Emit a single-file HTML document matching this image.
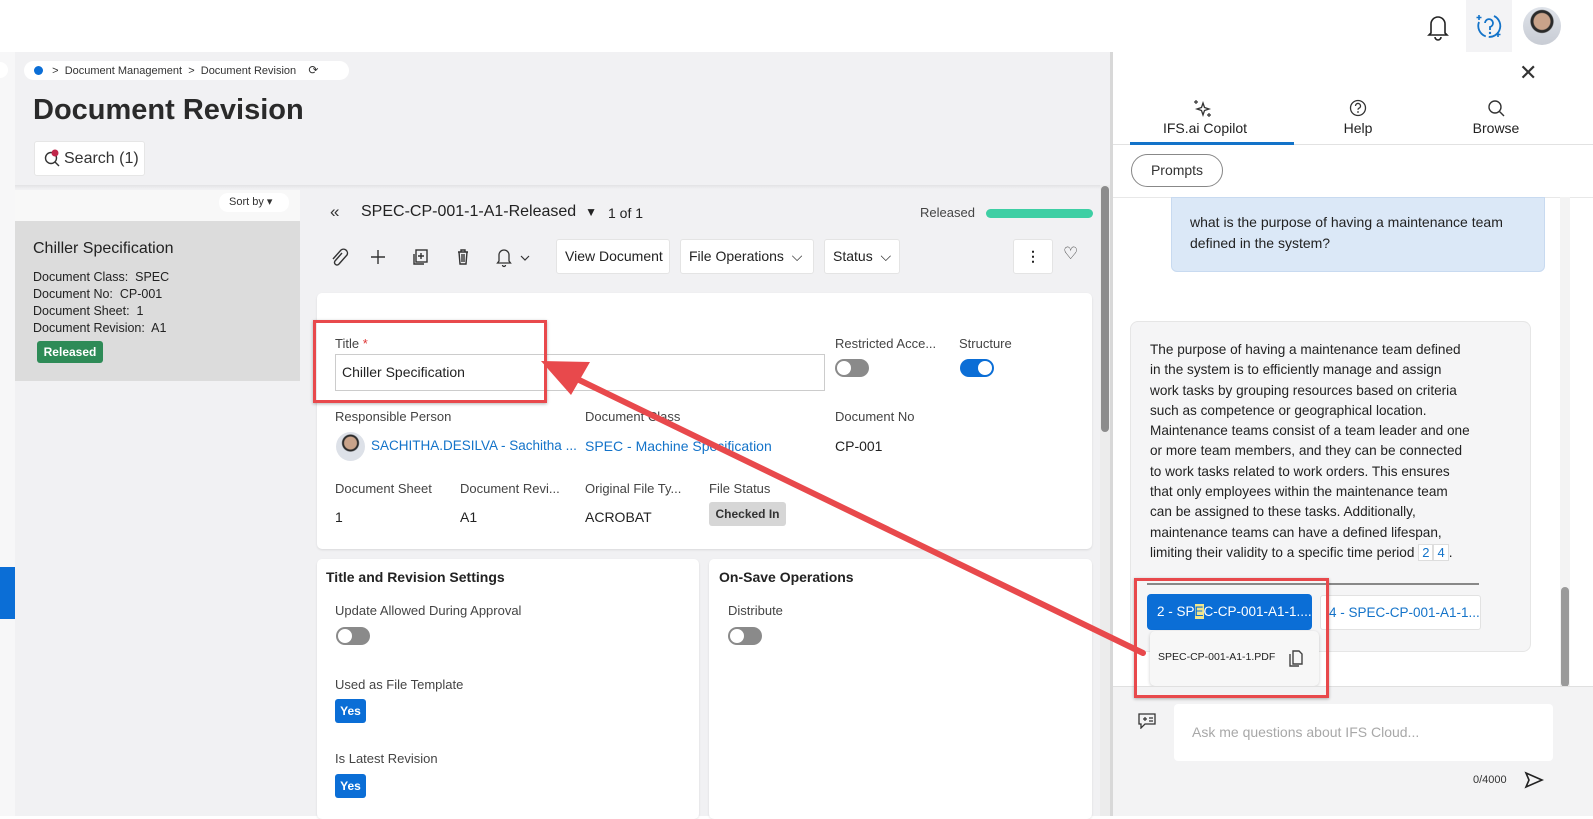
<!DOCTYPE html>
<html><head><meta charset="utf-8"><style>
*{box-sizing:border-box;margin:0;padding:0}
body{width:1593px;height:816px;overflow:hidden;font-family:"Liberation Sans",sans-serif;background:#fff;position:relative;color:#222}
.a{position:absolute;white-space:nowrap}
.lbl{font-size:13px;color:#444}
.val{font-size:14px;color:#222}
.link{font-size:14px;color:#1373c9}
.tog{width:34px;height:18px;border-radius:9px;background:#8a8a8a;position:absolute}
.tog::after{content:"";position:absolute;left:1px;top:1px;width:16px;height:16px;border-radius:50%;background:#fff;border:1px solid #8a8a8a;box-sizing:border-box}
.tog.on{background:#0b6ed6}.tog.on::after{left:17px;border-color:#0b6ed6}
.yes{background:#0b6ed6;color:#fff;font-weight:bold;font-size:12px;border-radius:3px;width:31px;height:24px;line-height:24px;text-align:center;position:absolute}
.btn{position:absolute;background:#fff;border:1px solid #e4e4e4;border-radius:3px;font-size:14px;height:35px;line-height:33px;padding:0 8px;color:#222;white-space:nowrap}
.card{position:absolute;background:#fff;border-radius:5px;box-shadow:0 1px 2px rgba(0,0,0,.1)}
</style></head><body>
<div class="a" style="left:0;top:0;width:1593px;height:51px;background:#fff"></div>
<svg class="a" style="left:1425px;top:13px" width="26" height="28" viewBox="0 0 26 28"><path d="M6 20V11a7 7 0 0 1 14 0v9l2 2H4z M10 24a3 3 0 0 0 6 0" fill="none" stroke="#222" stroke-width="1.6"/></svg>
<div class="a" style="left:1466px;top:0;width:46px;height:52px;background:#f3f3f5"></div>
<svg class="a" style="left:1475px;top:12px" width="28" height="28" viewBox="0 0 28 28"><path d="M19 4a11 11 0 1 1-15 6" fill="none" stroke="#1373c9" stroke-width="1.8" stroke-dasharray="30 3"/><path d="M10 11a4 4 0 1 1 5 4v3" fill="none" stroke="#1373c9" stroke-width="1.8"/><circle cx="15" cy="21" r="1.2" fill="#1373c9"/><path d="M4 3v5M1.5 5.5h5M23 20v5M20.5 22.5h5" stroke="#1373c9" stroke-width="1.6"/></svg>
<div class="a" style="left:1523px;top:7px;width:38px;height:38px;border-radius:50%;background:radial-gradient(circle at 50% 38%,#c9a38a 0 8px,#2a2a2a 9px 11px,transparent 12px),linear-gradient(#dfe3ea,#c8ccd4)"></div>
<div class="a" style="left:0;top:52px;width:1110px;height:764px;background:#f1f1f3"></div>
<div class="a" style="left:0;top:52px;width:15px;height:764px;background:#f7f7f8"></div>
<div class="a" style="left:0;top:62px;width:8px;height:16px;background:#fff;border-radius:0 8px 8px 0"></div>
<div class="a" style="left:0;top:567px;width:15px;height:52px;background:#0b6ed6"></div>
<div class="a" style="left:24px;top:61px;width:325px;height:19px;background:#fff;border-radius:10px;font-size:11px;color:#333;line-height:19px;padding-left:10px"><span style="display:inline-block;width:9px;height:9px;border-radius:50%;background:#0b6ed6;vertical-align:-1px"></span>&nbsp;&nbsp;&nbsp;&gt;&nbsp; Document Management&nbsp; &gt;&nbsp; Document Revision&nbsp;&nbsp;&nbsp; <span style="font-size:12px">⟳</span></div>
<div class="a" style="left:33px;top:94px;font-size:29px;font-weight:bold;color:#2a2a2a">Document Revision</div>
<div class="a" style="left:34px;top:141px;width:111px;height:35px;background:#fff;border:1px solid #e6e6e6;border-radius:3px;font-size:16px;line-height:33px;padding-left:29px;color:#333">Search (1)</div>
<svg class="a" style="left:43px;top:148px" width="20" height="20"><circle cx="8" cy="10" r="5.5" fill="none" stroke="#333" stroke-width="1.4"/><path d="M12 14l4 4" stroke="#333" stroke-width="1.4"/><circle cx="12" cy="5" r="3.5" fill="#c0274a"/></svg>
<div class="a" style="left:15px;top:185px;width:1085px;height:4px;background:linear-gradient(#e2e2e4,#f1f1f3)"></div>
<div class="a" style="left:15px;top:190px;width:285px;height:31px;background:#f8f8f8"></div>
<div class="a" style="left:219px;top:193px;width:70px;height:19px;background:#fff;border-radius:9px;font-size:11px;line-height:19px;padding-left:10px;color:#333">Sort by &#9662;</div>
<div class="a" style="left:15px;top:221px;width:285px;height:160px;background:#dcdcdc"></div>
<div class="a" style="left:33px;top:240px;font-size:16px;color:#222">Chiller Specification</div>
<div class="a" style="left:33px;top:269px;font-size:12.5px;line-height:17px;color:#222">Document Class:&nbsp; SPEC<br>Document No:&nbsp; CP-001<br>Document Sheet:&nbsp; 1<br>Document Revision:&nbsp; A1</div>
<div class="a" style="left:37px;top:341px;width:66px;height:22px;background:#2e8b57;color:#fff;font-weight:bold;font-size:12px;line-height:22px;text-align:center;border-radius:3px">Released</div>
<div class="a" style="left:330px;top:202px;font-size:17px;color:#333">«</div>
<div class="a" style="left:361px;top:203px;font-size:16px;color:#222">SPEC-CP-001-1-A1-Released&nbsp; <span style="font-size:12px">▼</span></div>
<div class="a" style="left:608px;top:205px;font-size:14px;color:#222">1 of 1</div>
<div class="a" style="left:920px;top:205px;font-size:13px;color:#444">Released</div>
<div class="a" style="left:986px;top:209px;width:107px;height:9px;background:#3ecfa4;border-radius:5px"></div>
<svg class="a" style="left:328px;top:245px" width="150" height="24" viewBox="0 0 150 24"><g fill="none" stroke="#333" stroke-width="1.4"><path d="M14 8l-7 8a2.5 2.5 0 0 0 4 3l8-9a4 4 0 0 0-6-5l-8 9"/><path d="M50 5v14M43 12h14"/><rect x="88" y="5" width="11" height="12"/><path d="M86 9v10h10M93 8v6M90 11h6"/><path d="M130 7h10M133 7V5h4v2M131 7l1 12h6l1-12M134 9v8M136 9v8"/></g></svg>
<svg class="a" style="left:495px;top:245px" width="44" height="24"><path d="M4 16V10a5 5 0 0 1 10 0v6l1.5 2h-13z M7.5 20a1.5 1.5 0 0 0 3 0" fill="none" stroke="#333" stroke-width="1.3"/><path d="M26 11l4 4 4-4" fill="none" stroke="#333" stroke-width="1.2"/></svg>
<div class="btn" style="left:556px;top:239px;width:114px">View Document</div>
<div class="btn" style="left:680px;top:239px;width:134px">File Operations&nbsp; ⌵</div>
<div class="btn" style="left:824px;top:239px;width:76px">Status&nbsp; ⌵</div>
<div class="btn" style="left:1013px;top:239px;width:40px;text-align:center;font-weight:bold">⋮</div>
<div class="a" style="left:1063px;top:244px;font-size:17px;color:#444">♡</div>
<div class="card" style="left:317px;top:293px;width:775px;height:256px"></div>
<div class="a lbl" style="left:335px;top:336px">Title <span style="color:#d33">*</span></div>
<div class="a" style="left:335px;top:354px;width:490px;height:37px;border:1px solid #ccc;font-size:14px;line-height:35px;padding-left:6px">Chiller Specification</div>
<div class="a lbl" style="left:835px;top:336px">Restricted Acce...</div>
<div class="tog" style="left:835px;top:359px"></div>
<div class="a lbl" style="left:959px;top:336px">Structure</div>
<div class="tog on" style="left:960px;top:359px"></div>
<div class="a lbl" style="left:335px;top:409px">Responsible Person</div>
<div class="a" style="left:336px;top:432px;width:29px;height:29px;border-radius:50%;background:radial-gradient(circle at 50% 38%,#c9a38a 0 6px,#2a2a2a 7px 8px,transparent 9px),#dde1e8"></div>
<div class="a link" style="left:371px;top:438px;font-size:13.5px">SACHITHA.DESILVA - Sachitha ...</div>
<div class="a lbl" style="left:585px;top:409px">Document Class</div>
<div class="a link" style="left:585px;top:438px">SPEC - Machine Specification</div>
<div class="a lbl" style="left:835px;top:409px">Document No</div>
<div class="a val" style="left:835px;top:438px">CP-001</div>
<div class="a lbl" style="left:335px;top:481px">Document Sheet</div>
<div class="a val" style="left:335px;top:509px">1</div>
<div class="a lbl" style="left:460px;top:481px">Document Revi...</div>
<div class="a val" style="left:460px;top:509px">A1</div>
<div class="a lbl" style="left:585px;top:481px">Original File Ty...</div>
<div class="a val" style="left:585px;top:509px">ACROBAT</div>
<div class="a lbl" style="left:709px;top:481px">File Status</div>
<div class="a" style="left:709px;top:502px;width:77px;height:24px;background:#d6d6d6;border-radius:3px;font-size:12px;font-weight:bold;line-height:24px;text-align:center;color:#333">Checked In</div>
<div class="card" style="left:317px;top:559px;width:382px;height:260px"></div>
<div class="a" style="left:326px;top:569px;font-size:14px;font-weight:bold;color:#222">Title and Revision Settings</div>
<div class="a lbl" style="left:335px;top:603px">Update Allowed During Approval</div>
<div class="tog" style="left:336px;top:627px"></div>
<div class="a lbl" style="left:335px;top:677px">Used as File Template</div>
<div class="yes" style="left:335px;top:699px">Yes</div>
<div class="a lbl" style="left:335px;top:751px">Is Latest Revision</div>
<div class="yes" style="left:335px;top:774px">Yes</div>
<div class="card" style="left:709px;top:559px;width:383px;height:260px"></div>
<div class="a" style="left:719px;top:569px;font-size:14px;font-weight:bold;color:#222">On-Save Operations</div>
<div class="a lbl" style="left:728px;top:603px">Distribute</div>
<div class="tog" style="left:728px;top:627px"></div>
<div class="a" style="left:1100px;top:185px;width:10px;height:631px;background:#ececec"></div>
<div class="a" style="left:1101px;top:186px;width:8px;height:246px;background:#8c8c8c;border-radius:4px"></div>
<div class="a" style="left:1110px;top:52px;width:3px;height:764px;background:#d8d8d8"></div>
<div class="a" style="left:1113px;top:52px;width:480px;height:764px;background:#fff"></div>
<div class="a" style="left:1519px;top:60px;font-size:22px;color:#333">✕</div>
<svg class="a" style="left:1193px;top:99px" width="20" height="20" viewBox="0 0 20 20"><path d="M10 4l1.5 4.5L16 10l-4.5 1.5L10 16l-1.5-4.5L4 10l4.5-1.5z" fill="none" stroke="#333" stroke-width="1.3"/><path d="M3 1v4M1 3h4M16 14v4M14 16h4" stroke="#333" stroke-width="1.2"/></svg>
<div class="a" style="left:1150px;top:120px;width:110px;text-align:center;font-size:14px;color:#222">IFS.ai Copilot</div>
<svg class="a" style="left:1349px;top:99px" width="18" height="18"><circle cx="9" cy="9" r="7.5" fill="none" stroke="#333" stroke-width="1.3"/><path d="M6.5 7a2.5 2.5 0 1 1 3.3 2.3c-.6.3-.8.7-.8 1.4" fill="none" stroke="#333" stroke-width="1.3"/><circle cx="9" cy="13" r=".9" fill="#333"/></svg>
<div class="a" style="left:1338px;top:120px;width:40px;text-align:center;font-size:14px;color:#222">Help</div>
<svg class="a" style="left:1487px;top:99px" width="18" height="18"><circle cx="8" cy="8" r="6" fill="none" stroke="#333" stroke-width="1.4"/><path d="M12.5 12.5L17 17" stroke="#333" stroke-width="1.4"/></svg>
<div class="a" style="left:1466px;top:120px;width:60px;text-align:center;font-size:14px;color:#222">Browse</div>
<div class="a" style="left:1113px;top:144px;width:480px;height:1px;background:#e2e2e2"></div>
<div class="a" style="left:1130px;top:142px;width:164px;height:3px;background:#1373c9"></div>
<div class="a" style="left:1131px;top:154px;width:92px;height:33px;border:1px solid #888;border-radius:17px;font-size:14px;line-height:31px;text-align:center;color:#333">Prompts</div>
<div class="a" style="left:1113px;top:197px;width:480px;height:1px;background:#e8e8e8"></div>
<div class="a" style="left:1560px;top:197px;width:10px;height:490px;background:#f3f3f3"></div>
<div class="a" style="left:1561px;top:587px;width:8px;height:100px;background:#9a9a9a;border-radius:4px"></div>
<div class="a" style="left:1171px;top:197px;width:374px;height:75px;background:#dbe8f7;border:1px solid #c8daf0;border-radius:0 0 6px 6px;font-size:14px;line-height:21px;padding:14px 18px;color:#222">what is the purpose of having a maintenance team<br>defined in the system?</div>
<div class="a" style="left:1130px;top:321px;width:401px;height:331px;background:#f5f5f6;border:1px solid #e6e6e6;border-radius:8px"></div>
<div class="a" style="left:1150px;top:340px;font-size:13.6px;line-height:20.3px;color:#222">The purpose of having a maintenance team defined<br>in the system is to efficiently manage and assign<br>work tasks by grouping resources based on criteria<br>such as competence or geographical location.<br>Maintenance teams consist of a team leader and one<br>or more team members, and they can be connected<br>to work tasks related to work orders. This ensures<br>that only employees within the maintenance team<br>can be assigned to these tasks. Additionally,<br>maintenance teams can have a defined lifespan,<br>limiting their validity to a specific time period <span style="color:#1373c9;font-size:13px;border:1px solid #ddd;padding:0 3px;background:#fff">2</span><span style="color:#1373c9;font-size:13px;border:1px solid #ddd;padding:0 3px;background:#fff">4</span>.</div>
<div class="a" style="left:1147px;top:583px;width:332px;height:2px;background:#888"></div>
<div class="a" style="left:1320px;top:595px;width:161px;height:35px;background:#fff;border:1px solid #e2e2e2;border-radius:3px;font-size:13.5px;color:#1373c9;line-height:33px;padding-left:8px;overflow:hidden">4 - SPEC-CP-001-A1-1....</div>
<div class="a" style="left:1147px;top:594px;width:165px;height:36px;background:#0b6ed6;border-radius:4px;font-size:13.5px;color:#fff;line-height:36px;padding-left:10px;overflow:hidden">2 - SP<span style="background:#f0e68c;color:#0b6ed6">E</span>C-CP-001-A1-1....</div>
<div class="a" style="left:1150px;top:631px;width:169px;height:55px;background:#f7f7f7;border-radius:5px;box-shadow:0 1px 3px rgba(0,0,0,.2);font-size:10.5px;line-height:52px;padding-left:8px;color:#222">SPEC-CP-001-A1-1.PDF</div>
<svg class="a" style="left:1288px;top:649px" width="16" height="18"><path d="M5 2h6l3 3v10H5z M2 5v12h9" fill="none" stroke="#444" stroke-width="1.4"/></svg>
<div class="a" style="left:1113px;top:686px;width:480px;height:130px;background:#f3f3f4;border-top:1px solid #e0e0e0"></div>
<svg class="a" style="left:1137px;top:711px" width="20" height="18"><path d="M2 3h16v10H8l-4 4v-4H2z" fill="none" stroke="#333" stroke-width="1.3"/><path d="M6 8h4M8 6v4M12 7h4M12 10h4" stroke="#333" stroke-width="1.2"/></svg>
<div class="a" style="left:1174px;top:704px;width:379px;height:57px;background:#fff;border-radius:4px;font-size:14px;line-height:57px;padding-left:18px;color:#a8a8a8">Ask me questions about IFS Cloud...</div>
<div class="a" style="left:1473px;top:774px;font-size:11px;color:#333">0/4000</div>
<svg class="a" style="left:1524px;top:771px" width="20" height="18"><path d="M2 2l16 7-16 7 3-7z" fill="none" stroke="#222" stroke-width="1.6"/></svg>
<div class="a" style="left:313px;top:320px;width:234px;height:83px;border:3px solid #e8494c;box-shadow:0 1px 3px rgba(0,0,0,.3)"></div>
<div class="a" style="left:1134px;top:578px;width:195px;height:120px;border:3px solid #e8494c;box-shadow:0 1px 3px rgba(0,0,0,.3)"></div>
<svg class="a" style="left:0;top:0" width="1593" height="816"><path d="M1143 653L575 378" stroke="#e8494c" stroke-width="6" stroke-linecap="round"/><path d="M541 361L590 362L571 395z" fill="#e8494c"/></svg>
</body></html>
